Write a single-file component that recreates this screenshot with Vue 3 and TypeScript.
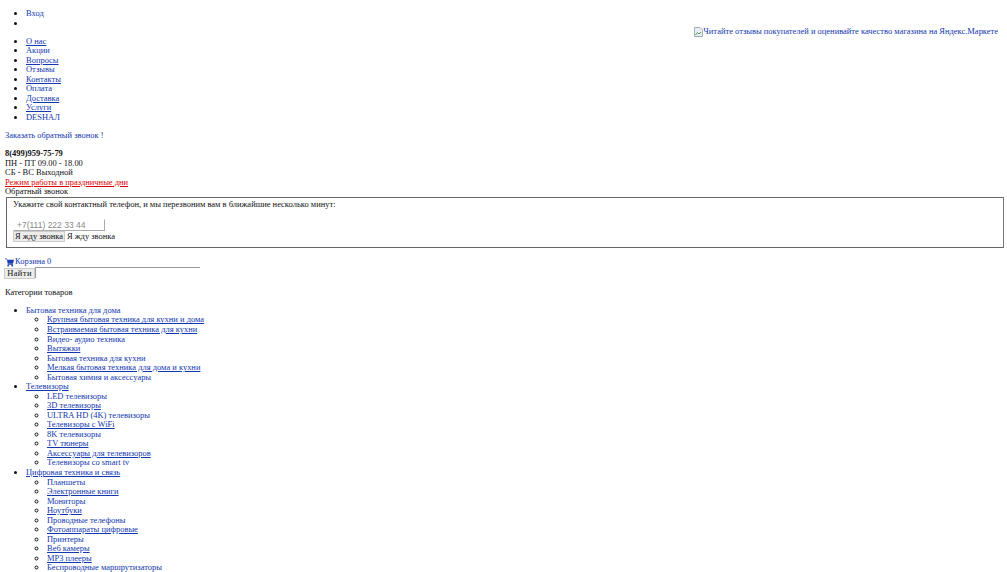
<script setup lang="ts">
interface Row { t: string; u?: boolean }
interface Cat extends Row { kids: Row[] }
const menu: Row[] = [
  { t: 'О нас', u: true }, { t: 'Акции' }, { t: 'Вопросы', u: true }, { t: 'Отзывы' },
  { t: 'Контакты', u: true }, { t: 'Оплата' }, { t: 'Доставка', u: true }, { t: 'Услуги', u: true }, { t: 'DESHAЛ' },
]
const cats: Cat[] = [
  { t: 'Бытовая техника для дома', kids: [
    { t: 'Крупная бытовая техника для кухни и дома', u: true },
    { t: 'Встраиваемая бытовая техника для кухни', u: true },
    { t: 'Видео- аудио техника' },
    { t: 'Вытяжки', u: true },
    { t: 'Бытовая техника для кухни' },
    { t: 'Мелкая бытовая техника для дома и кухни', u: true },
    { t: 'Бытовая химия и аксессуары' },
  ] },
  { t: 'Телевизоры', u: true, kids: [
    { t: 'LED телевизоры' },
    { t: '3D телевизоры', u: true },
    { t: 'ULTRA HD (4K) телевизоры' },
    { t: 'Телевизоры с WiFi', u: true },
    { t: '8K телевизоры' },
    { t: 'TV тюнеры', u: true },
    { t: 'Аксессуары для телевизоров', u: true },
    { t: 'Телевизоры со smart tv' },
  ] },
  { t: 'Цифровая техника и связь', u: true, kids: [
    { t: 'Планшеты' },
    { t: 'Электронные книги', u: true },
    { t: 'Мониторы' },
    { t: 'Ноутбуки', u: true },
    { t: 'Проводные телефоны' },
    { t: 'Фотоаппараты цифровые', u: true },
    { t: 'Принтеры' },
    { t: 'Веб камеры', u: true },
    { t: 'MP3 плееры', u: true },
    { t: 'Беспроводные маршрутизаторы' },
  ] },
]
</script>

<template>
  <div class="page">
    <ul class="top">
      <li><a class="lnk">Вход</a></li>
      <li class="market">
        <a class="lnk badge">
          <svg class="broken" width="9" height="10" viewBox="0 0 9 10">
            <path d="M.5.500h5.500l2.500 2.500v6.500H.5z" fill="#e8eef5" stroke="#a4adb6" stroke-width="1" />
            <path d="M1.500 8l2-2.500 1.500 1.500 2-2" fill="none" stroke="#5a9a4a" stroke-width="1" />
          </svg>Читайте отзывы покупателей и оценивайте качество магазина на Яндекс.Маркете
        </a>
      </li>
    </ul>
    <ul class="menu">
      <li v-for="m in menu" :key="m.t"><a class="lnk" :class="{ u: m.u }">{{ m.t }}</a></li>
    </ul>
    <p class="order"><a class="lnk">Заказать обратный звонок !</a></p>
    <div class="contacts">
      <div class="phone">8(499)959-75-79</div>
      <div>ПН - ПТ 09.00 - 18.00</div>
      <div>СБ - ВС Выходной</div>
      <div class="red">Режим работы в праздничные дни</div>
      <div>Обратный звонок</div>
    </div>
    <fieldset class="box">
      <div class="hint">Укажите свой контактный телефон, и мы перезвоним вам в ближайшие несколько минут:</div>
      <input class="tel" placeholder="+7(111) 222 33 44" />
      <div class="send"><button class="btn wide">Я жду звонка</button><span class="after">Я жду звонка</span></div>
    </fieldset>
    <div class="cart">
      <svg width="9" height="9" viewBox="0 0 10 9"><path d="M0 0h2l.5 1.500H10L9 5.500H3L2 1H0zM3 6h6v1H3z" fill="#1a3fae" /><circle cx="3.500" cy="8" r="1" fill="#1a3fae" /><circle cx="8" cy="8" r="1" fill="#1a3fae" /></svg>
      <a class="lnk">Корзина 0</a>
    </div>
    <div class="search"><button class="btn find">Найти</button><div class="field"></div></div>
    <p class="cat-title">Категории товаров</p>
    <ul class="cats">
      <li v-for="c in cats" :key="c.t">
        <a class="lnk" :class="{ u: c.u }">{{ c.t }}</a>
        <ul class="sub">
          <li v-for="k in c.kids" :key="k.t"><a class="lnk" :class="{ u: k.u }">{{ k.t }}</a></li>
        </ul>
      </li>
    </ul>
  </div>
</template>

<style scoped>
.page {
  font-family: "Liberation Serif", "Times New Roman", serif;
  font-size: 8.47px;
  line-height: 9.53px;
  color: #111;
  height: 572px;
  overflow: hidden;
}
ul { margin: 0; padding: 0 0 0 26px; list-style: disc; }
.top { padding-top: 9px; }
.top li { min-height: 9.53px; }
.market { position: relative; }
.badge { position: absolute; right: 9px; top: 8px; white-space: nowrap; display: flex; align-items: center; }
.broken { margin-right: 0; flex: none; }
.menu { margin-top: 8.700px; }
.lnk { color: #1237b0; }
.u { text-decoration: underline; }
.order { margin: 8.500px 0 0 5px; }
.contacts { margin: 8.500px 0 0 5px; }
.phone { font-weight: bold; }
.red { color: #e00000; text-decoration: underline; }
.box {
  margin: 0 3px 0 6px;
  padding: 1px 6px 0;
  height: 51px;
  box-sizing: border-box;
  border: 1px solid #666;
  border-right-color: #777;
  min-width: 0;
}
.hint { line-height: 10px; }
.tel {
  display: block;
  margin-top: 10px;
  width: 92px;
  height: 12px;
  box-sizing: border-box;
  padding: 0 3px;
  border: 1px solid #aaa;
  border-top-color: #fff;
  border-left-color: #fff;
  font: 8.500px "Liberation Sans", sans-serif;
  outline: none;
}
.tel::placeholder { color: #888; opacity: 1; }
.send { display: flex; align-items: center; }
.btn {
  font: 8.47px "Liberation Serif", serif;
  padding: 0;
  background: #ececec;
  border: 1px solid #ccc;
  color: #111;
  white-space: nowrap;
}
.wide { width: 52px; height: 11px; line-height: 9px; }
.after { margin: 1px 0 0 2px; }
.cart { margin: 9.500px 0 0 5px; display: flex; align-items: center; gap: 1px; height: 10px; }
.search { margin: 0 0 0 4px; display: flex; align-items: flex-start; }
.find { width: 31px; height: 11px; line-height: 9px; margin-top: 1px; letter-spacing: 0.4px; }
.field { width: 165px; height: 11px; border-top: 1px solid #999; border-left: 1px solid #999; box-sizing: border-box; }
.cat-title { margin: 8.500px 0 0 5px; }
.cats { margin-top: 8.700px; }
.sub { padding-left: 21px; list-style: circle; }
</style>
<style>
html, body { overflow: hidden; background: #fff; }
</style>
